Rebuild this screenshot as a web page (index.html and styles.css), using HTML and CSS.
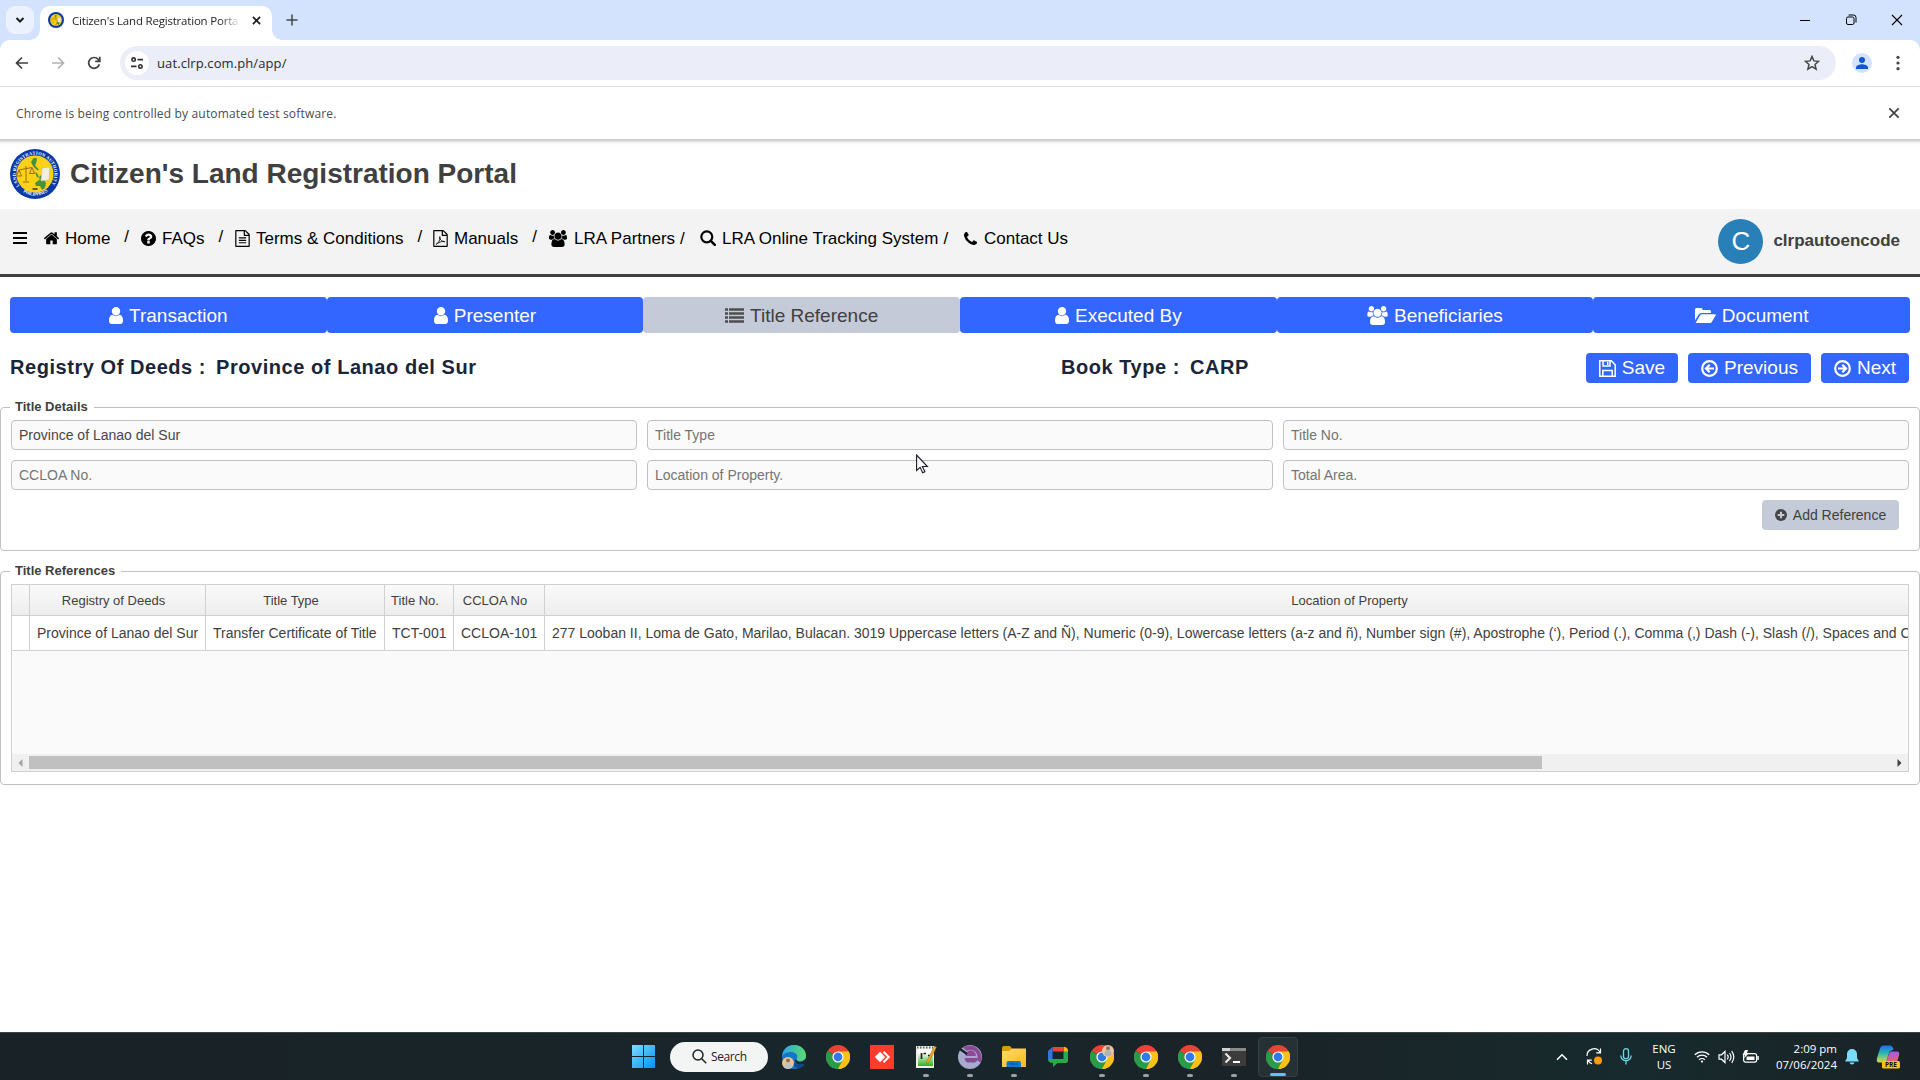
FILE: index.html
```html
<!DOCTYPE html>
<html lang="en">
<head>
<meta charset="utf-8">
<title>Citizen's Land Registration Portal</title>
<link rel="stylesheet" href="styles.css">
</head>
<body>
<svg class="defs" aria-hidden="true">
  <defs>
    <path id="arc-top" d="M9.6 36.8A19.4 19.4 0 1 1 40.4 36.8"/>
    <path id="arc-bottom" d="M10 40.5A21.6 21.6 0 0 0 40 40.5"/>
    <linearGradient id="win" x1="0" y1="0" x2="1" y2="1"><stop offset="0" stop-color="#7fdcff"/><stop offset="1" stop-color="#0091f5"/></linearGradient>
    <linearGradient id="edge" x1="0" y1="0" x2="1" y2="0"><stop offset="0" stop-color="#2aa5e8"/><stop offset="1" stop-color="#5ddb6a"/></linearGradient>
    <linearGradient id="npp" x1="0" y1="0" x2="0" y2="1"><stop offset="0.2" stop-color="#fff"/><stop offset="1" stop-color="#2fb31d"/></linearGradient>
    <linearGradient id="folder" x1="0" y1="0" x2="1" y2="1"><stop offset="0" stop-color="#ffdc6b"/><stop offset="1" stop-color="#fbb91d"/></linearGradient>
    <linearGradient id="cop1" x1="0" y1="0" x2="0" y2="1"><stop offset="0" stop-color="#1b6ff0"/><stop offset="0.45" stop-color="#2bb8b0"/><stop offset="1" stop-color="#d6dd3c"/></linearGradient>
    <linearGradient id="cop2" x1="0" y1="0" x2="0" y2="1"><stop offset="0" stop-color="#a05cf0"/><stop offset="1" stop-color="#f0605e"/></linearGradient>
  </defs>
  <symbol id="seal" viewBox="0 0 50 50">
    <circle cx="25" cy="25" r="25" fill="#0a3aa6"/>
    <circle cx="25" cy="25" r="18.6" fill="#fdd116"/>
    <path d="M23.5 9l3.500.3-.6 4-1.200 2.700 1.500 2.600 2.300 2-1.400.8-3.400-3-1.800-2.400-1.400-3z" fill="#4a8f3c"/>
    <path d="M25 23l2 1 2 4-2 .5zM30 26l2 2-1 3-2-1zM25 34l4-3 5 0 2 3-1 5-3 2-2-4-4 0z" fill="#4a8f3c"/>
    <path d="M32 19l8-1-1 13-8 1z" fill="#f4efdd" stroke="#b9b7a8" stroke-width=".6"/>
    <path d="M16 17v15M9 21l13-2.500M9 21l-2.500 6h5zM22 18.500l-2.500 6h5zM13 33h6" fill="none" stroke="#9a6a1c" stroke-width="1"/>
    <path d="M22.500 40h5" stroke="#333" stroke-width="1.500"/>
  </symbol>
  <symbol id="user" viewBox="256 128 1280 1536"><path d="M1536 1399q0 109-62.5 187t-150.5 78h-854q-88 0-150.5-78t-62.5-187q0-85 8.5-160.5t31.5-152 58.5-131 94-89 134.5-34.5q131 128 313 128t313-128q76 0 134.5 34.5t94 89 58.5 131 31.5 152 8.500 160.500zm-256-887q0 159-112.500 271.500t-271.500 112.500-271.500-112.500-112.500-271.500 112.500-271.500 271.500-112.500 271.500 112.500 112.500 271.500z"/></symbol>
  <symbol id="users" viewBox="0 0 1920 1792"><path d="M593 896q-162 5-265 128h-134q-82 0-138-40.5t-56-118.5q0-353 124-353 6 0 43.5 21t97.5 42.5 119 21.5q67 0 133-23-5 37-5 66 0 139 81 256zm1071 637q0 120-73 189.5t-194 69.5h-874q-121 0-194-69.5t-73-189.5q0-53 3.5-103.5t14-109 26.5-108.5 43-97.5 62-81 85.5-53.5 111.5-20q10 0 43 21.5t73 48 107 48 135 21.5 135-21.5 107-48 73-48 43-21.5q61 0 111.5 20t85.5 53.5 62 81 43 97.5 26.5 108.5 14 109 3.5 103.5zm-1024-1277q0 106-75 181t-181 75-181-75-75-181 75-181 181-75 181 75 75 181zm704 384q0 159-112.5 271.5t-271.5 112.5-271.5-112.5-112.5-271.5 112.5-271.5 271.5-112.5 271.5 112.5 112.5 271.5zm576 225q0 78-56 118.5t-138 40.5h-134q-103-123-265-128 81-117 81-256 0-29-5-66 66 23 133 23 59 0 119-21.5t97.5-42.5 43.5-21q124 0 124 353zm-128-609q0 106-75 181t-181 75-181-75-75-181 75-181 181-75 181 75 75 181z"/></symbol>
  <symbol id="chrome" viewBox="0 0 24 24">
    <path d="M12 12L1.600 6A12 12 0 0 1 22.400 6z" fill="#ea4335"/>
    <path d="M12 12l10.400-6A12 12 0 0 1 12 24z" fill="#fbc116"/>
    <path d="M12 12v12A12 12 0 0 1 1.600 6z" fill="#2a9b47"/>
    <path d="M12 6.500h10.700A12 12 0 0 1 12 24l4.800-9.300z" fill="#fbc116"/>
    <path d="M12 24l4.800-9.300-9.600 0L1.600 6A12 12 0 0 0 12 24z" fill="#2a9b47"/>
    <circle cx="12" cy="12" r="5.600" fill="#fff"/><circle cx="12" cy="12" r="4.400" fill="#2f7be8"/>
  </symbol>
</svg>

<header class="browser">
  <div class="tabstrip">
    <div class="tab-search"><svg width="10" height="10" viewBox="0 0 10 10"><path d="M1.500 3l3.500 3.500L8.500 3" fill="none" stroke="#1f1f1f" stroke-width="2"/></svg></div>
    <div class="tab">
      <svg class="favicon" width="16" height="16"><use href="#seal"/></svg>
      <span class="tab-title">Citizen's Land Registration Porta</span>
      <svg class="tab-close" width="9" height="9" viewBox="0 0 10 10"><path d="M1 1l8 8M9 1L1 9" stroke="#1f1f1f" stroke-width="1.900"/></svg>
    </div>
    <svg class="new-tab" width="12" height="12" viewBox="0 0 12 12"><path d="M6 .5v11M.5 6h11" stroke="#444746" stroke-width="1.500"/></svg>
    <div class="window-controls">
      <svg width="12" height="12" viewBox="0 0 12 12"><path d="M1 6.500h10" stroke="#000"/></svg>
      <svg width="12" height="12" viewBox="0 0 12 12"><rect x="1.500" y="3" width="7.500" height="7.500" rx="1.500" fill="none" stroke="#000"/><path d="M3.500 1h5a2.500 2.500 0 0 1 2.500 2.500v5" fill="none" stroke="#000"/></svg>
      <svg width="12" height="12" viewBox="0 0 12 12"><path d="M1 1l10 10M11 1L1 11" stroke="#000" stroke-width="1.100"/></svg>
    </div>
  </div>
  <div class="toolbar">
    <svg width="14" height="14" viewBox="0 0 14 14"><path d="M13 7H2M7 1.500L1.500 7 7 12.500" fill="none" stroke="#3c4043" stroke-width="1.700"/></svg>
    <svg width="14" height="14" viewBox="0 0 14 14"><path d="M1 7h11M7 1.500L12.500 7 7 12.500" fill="none" stroke="#b0b3b6" stroke-width="1.700"/></svg>
    <svg width="14" height="14" viewBox="0 0 14 14"><path d="M12.300 8.200A5.400 5.400 0 1 1 11 3.200L12.600 5M12.800.7v4.600H8.200" fill="none" stroke="#3c4043" stroke-width="1.700"/></svg>
    <div class="omnibox">
      <span class="site-info"><svg width="14" height="14" viewBox="0 0 14 14" fill="none" stroke="#333" stroke-width="1.600"><circle cx="3.600" cy="3.600" r="1.700"/><path d="M7.500 3.600H13M1 10.400h5.500"/><circle cx="10.400" cy="10.400" r="1.700"/></svg></span>
      <span class="url">uat.clrp.com.ph/app/</span>
      <svg class="star" width="16" height="16" viewBox="0 0 16 16"><path d="M8 1.500l1.900 4.400 4.700.4-3.600 3.100 1.100 4.700L8 11.600l-4.100 2.500L5 9.400 1.400 6.300l4.700-.4z" fill="none" stroke="#444746" stroke-width="1.500"/></svg>
    </div>
    <span class="profile"><svg width="12" height="12" viewBox="0 0 12 12" fill="#0b57d0"><circle cx="6" cy="3" r="3"/><path d="M0 12v-1.500C0 8 4 7.200 6 7.200S12 8 12 10.500V12z"/></svg></span>
    <svg class="menu-dots" width="4" height="16" viewBox="0 0 4 16" fill="#444746"><circle cx="2" cy="2.300" r="1.600"/><circle cx="2" cy="8" r="1.600"/><circle cx="2" cy="13.700" r="1.600"/></svg>
  </div>
  <div class="infobar">
    <span>Chrome is being controlled by automated test software.</span>
    <svg width="12" height="12" viewBox="0 0 12 12"><path d="M1.300 1.300l9.400 9.400M10.700 1.300l-9.400 9.400" stroke="#3c4043" stroke-width="1.700"/></svg>
  </div>
</header>

<div class="masthead">
  <svg class="logo" width="50" height="50" viewBox="0 0 50 50">
    <use href="#seal"/>
    <text class="seal-text"><textPath href="#arc-top" textLength="84">LAND REGISTRATION AUTHORITY</textPath></text>
    <text class="seal-text"><textPath href="#arc-bottom" startOffset="4" textLength="26">PHILIPPINES</textPath></text>
  </svg>
  <h1>Citizen's Land Registration Portal</h1>
</div>

<nav class="nav">
  <svg class="burger" width="14" height="14" viewBox="0 0 14 14"><path d="M0 2h14M0 7h14M0 12h14" stroke="#000" stroke-width="2.200"/></svg>
  <div class="nav-item home"><svg width="15" height="14" viewBox="90 150 1612 1450"><path d="M1472 992v480q0 26-19 45t-45 19h-384v-384h-256v384h-384q-26 0-45-19t-19-45v-480q0-1 .5-3t.5-3l575-474 575 474q1 2 1 6zm223-69l-62 74q-8 9-21 11h-3q-13 0-21-7l-692-577-692 577q-12 8-24 7-13-2-21-11l-62-74q-8-10-7-23.5t11-21.5l719-599q32-26 76-26t76 26l244 204v-195q0-14 9-23t23-9h192q14 0 23 9t9 23v408l219 182q10 8 11 21.5t-7 23.5z"/></svg><span>Home</span><i>/</i></div>
  <div class="nav-item faqs"><svg width="15" height="15" viewBox="128 128 1536 1536"><path d="M1024 1376v-192q0-14-9-23t-23-9h-192q-14 0-23 9t-9 23v192q0 14 9 23t23 9h192q14 0 23-9t9-23zm256-672q0-88-55.5-163t-138.5-116-170-41q-243 0-371 213-15 24 8 42l132 100q7 6 19 6 16 0 25-12 53-68 86-92 34-24 86-24 48 0 85.5 26t37.5 59q0 38-20 61t-68 45q-63 28-115.5 86.5t-52.5 125.5v36q0 14 9 23t23 9h192q14 0 23-9t9-23q0-19 21.5-49.5t54.5-49.5q32-18 49-28.5t46-35 44.5-48 28-60.5 12.5-81zm384 192q0 209-103 385.5t-279.5 279.5-385.5 103-385.5-103-279.5-279.5-103-385.5 103-385.5 279.5-279.5 385.5-103 385.5 103 279.5 279.5 103 385.5z"/></svg><span>FAQs</span><i>/</i></div>
  <div class="nav-item terms"><svg width="15" height="17" viewBox="128 0 1536 1792"><path d="M1596 380q28 28 48 76t20 88v1152q0 40-28 68t-68 28h-1344q-40 0-68-28t-28-68v-1600q0-40 28-68t68-28h896q40 0 88 20t76 48zm-444-244v376h376q-10-29-22-41l-313-313q-12-12-41-22zm384 1528v-1024h-416q-40 0-68-28t-28-68v-416h-768v1536h1280zm-1024-864q0-14 9-23t23-9h704q14 0 23 9t9 23v64q0 14-9 23t-23 9h-704q-14 0-23-9t-9-23v-64zm736 224q14 0 23 9t9 23v64q0 14-9 23t-23 9h-704q-14 0-23-9t-9-23v-64q0-14 9-23t23-9h704zm0 256q14 0 23 9t9 23v64q0 14-9 23t-23 9h-704q-14 0-23-9t-9-23v-64q0-14 9-23t23-9h704z"/></svg><span>Terms &amp; Conditions</span><i>/</i></div>
  <div class="nav-item manuals"><svg width="15" height="17" viewBox="128 0 1536 1792"><path d="M1596 380q28 28 48 76t20 88v1152q0 40-28 68t-68 28h-1344q-40 0-68-28t-28-68v-1600q0-40 28-68t68-28h896q40 0 88 20t76 48zm-444-244v376h376q-10-29-22-41l-313-313q-12-12-41-22zm384 1528v-1024h-416q-40 0-68-28t-28-68v-416h-768v1536h1280z"/><path d="M440 1500c200-60 440-420 400-800-80-30-60 460 500 560 60-120-500-80-900 240z" fill="none" stroke="#000" stroke-width="90"/></svg><span>Manuals</span><i>/</i></div>
  <div class="nav-item partners"><svg width="18" height="17"><use href="#users"/></svg><span>LRA Partners</span><i>/</i></div>
  <div class="nav-item tracking"><svg width="16" height="16" viewBox="0 0 16 16"><circle cx="6.800" cy="6.800" r="5.500" fill="none" stroke="#000" stroke-width="2.200"/><path d="M10.800 10.800l4 4" stroke="#000" stroke-width="2.500" stroke-linecap="round"/></svg><span>LRA Online Tracking System</span><i>/</i></div>
  <div class="nav-item contact"><svg width="13" height="13" viewBox="192 128 1408 1408"><path d="M1600 1240q0 27-10 70.5t-21 68.5q-21 50-122 106-94 51-186 51-27 0-53-3.5t-57.5-12.5-47-14.5-55.5-20.5-49-18q-98-35-175-83-127-79-264-216t-216-264q-48-77-83-175-3-9-18-49t-20.5-55.5-14.5-47-12.5-57.5-3.5-53q0-92 51-186 56-101 106-122 25-11 68.5-21t70.5-10q14 0 21 3 18 6 53 76 11 19 30 54t35 63.5 31 53.5q3 4 17.5 25t21.5 35.5 7 28.5q0 20-28.5 50t-62 55-62 53-28.5 46q0 9 5 22.5t8.5 20.5 14 24 11.5 19q76 137 174 235t235 174q2 1 19 11.5t24 14 20.5 8.5 22.5 5q18 0 46-28.5t53-62 55-62 50-28.5q14 0 28.5 7t35.5 21.5 25 17.5q25 15 53.5 31t63.5 35 54 30q70 35 76 53 3 7 3 21z"/></svg><span>Contact Us</span></div>
  <div class="account"><span class="avatar">C</span><b>clrpautoencode</b></div>
</nav>

<main>
  <div class="steps">
    <div class="step"><svg width="14" height="17"><use href="#user"/></svg><span>Transaction</span></div>
    <div class="step"><svg width="14" height="17"><use href="#user"/></svg><span>Presenter</span></div>
    <div class="step current"><svg width="19" height="15" viewBox="0 0 19 15"><path d="M0 1.500h3M0 5.500h3M0 9.500h3M0 13.500h3M4 1.500h15M4 5.500h15M4 9.500h15M4 13.500h15" stroke="#4d4d4d" stroke-width="2.600"/></svg><span>Title Reference</span></div>
    <div class="step"><svg width="14" height="17"><use href="#user"/></svg><span>Executed By</span></div>
    <div class="step"><svg width="21" height="19"><use href="#users"/></svg><span>Beneficiaries</span></div>
    <div class="step"><svg width="21" height="15" viewBox="0 0 21 15"><path d="M0 12.500V1.500Q0 0 1.500 0H6q1.500 0 1.500 1.500V2h7q1.500 0 1.500 1.500V5H6.500Q4.800 5 3.600 6.500zM1 14.200l4-6.700Q5.600 6.300 7 6.300h13q1.300 0 .6 1.200l-3.500 6Q16.300 15 15 15H1.500q-1 0-.5-.8z"/></svg><span>Document</span></div>
  </div>

  <div class="summary">
    <h2>Registry Of Deeds :<span>Province of Lanao del Sur</span></h2>
    <h2 class="book">Book Type :<span>CARP</span></h2>
    <div class="actions">
      <button class="btn save"><svg width="17" height="17" viewBox="0 0 17 17" fill="none" stroke="#fff" stroke-width="1.500"><path d="M.8.800h11.500l3.900 3.900v11.500H.8zM4 1v5h7V1M8.700 2v3M3.800 16v-5.500h9.400V16"/></svg>Save</button>
      <button class="btn previous"><svg width="17" height="17" viewBox="0 0 17 17" fill="none" stroke="#fff" stroke-width="2.200"><circle cx="8.500" cy="8.500" r="7.300"/><path d="M13 8.500H5.500M8.700 4.800L5 8.500l3.700 3.700"/></svg>Previous</button>
      <button class="btn next"><svg width="17" height="17" viewBox="0 0 17 17" fill="none" stroke="#fff" stroke-width="2.200"><circle cx="8.500" cy="8.500" r="7.300"/><path d="M4 8.500h7.500M8.300 4.800L12 8.500l-3.700 3.700"/></svg>Next</button>
    </div>
  </div>

  <fieldset class="details">
    <legend>Title Details</legend>
    <div class="fields">
      <input value="Province of Lanao del Sur">
      <input placeholder="Title Type">
      <input placeholder="Title No.">
      <input placeholder="CCLOA No.">
      <input placeholder="Location of Property.">
      <input placeholder="Total Area.">
    </div>
    <button class="add"><svg width="12" height="12" viewBox="0 0 12 12"><circle cx="6" cy="6" r="6" fill="#464646"/><path d="M6 2.700v6.600M2.700 6h6.600" stroke="#c4cad8" stroke-width="2"/></svg>Add Reference</button>
  </fieldset>

  <fieldset class="references">
    <legend>Title References</legend>
    <div class="grid">
      <div class="row head"><div></div><div>Registry of Deeds</div><div>Title Type</div><div>Title No.</div><div>CCLOA No</div><div>Location of Property</div></div>
      <div class="row"><div></div><div>Province of Lanao del Sur</div><div>Transfer Certificate of Title</div><div>TCT-001</div><div>CCLOA-101</div><div>277 Looban II, Loma de Gato, Marilao, Bulacan. 3019 Uppercase letters (A-Z and Ñ), Numeric (0-9), Lowercase letters (a-z and ñ), Number sign (#), Apostrophe (‘), Period (.), Comma (,) Dash (-), Slash (/), Spaces and C</div></div>
      <div class="scrollbar">
        <svg width="5" height="8" viewBox="0 0 5 8"><path d="M4.500 0v8L.5 4z" fill="#a3a3a3"/></svg>
        <div class="thumb"></div>
        <svg class="right" width="5" height="8" viewBox="0 0 5 8"><path d="M.5 0v8l4-4z" fill="#404040"/></svg>
      </div>
    </div>
  </fieldset>
</main>

<svg class="cursor" width="13" height="20" viewBox="0 0 13 20"><path d="M.6 1v15.500l3.500-3.200 2.600 5.500 2.200-1-2.500-5.300h5z" fill="#fff" stroke="#1a1a2a" stroke-width="1.100"/></svg>

<footer class="taskbar">
  <svg class="start" width="23" height="23" viewBox="0 0 23 23"><path d="M0 0h11v11H0zM12 0h11v11H12zM0 12h11v11H0zM12 12h11v11H12z" fill="url(#win)"/></svg>
  <div class="search"><svg width="15" height="15" viewBox="0 0 15 15" fill="none" stroke="#222" stroke-width="1.500"><circle cx="6" cy="6" r="5"/><path d="M9.700 9.700l4.500 4.500"/></svg>Search</div>
  <div class="apps">
    <div class="app"><svg width="24" height="24" viewBox="0 0 24 24"><circle cx="12" cy="12" r="12" fill="#1377c9"/><path d="M0 11C1 3 7 0 12 0c7 0 12 5 12 10.500 0 4-3 6-6.500 6-3 0-4-1.200-3.200-2.200 2.700-3.300-.3-7.300-4.800-7.300C5 7 1 9 0 11z" fill="url(#edge)"/><path d="M11 13c0 5 4 8 10.500 5.800C23 18 22 21 18 23c-5 1-9-4-7-10z" fill="#0c4b94"/><path d="M14 14c2 4 6 3.500 10-.5V19h-3c-4 1.500-8 0-8-4z" fill="#1b2831"/><circle cx="6" cy="18" r="6" fill="#edc58c"/><circle cx="6" cy="15.500" r="2" fill="#8b6d58"/><path d="M2.500 22.500q0-5 3.500-5t3.500 5q-3.500 3-7 0z" fill="#b9c3cd"/></svg></div>
    <div class="app"><svg width="24" height="24"><use href="#chrome"/></svg></div>
    <div class="app"><svg width="24" height="24" viewBox="0 0 24 24"><path d="M0 0h24v24H0z" fill="#ff3b30"/><path d="M10 6.800l5.200 5.200-5.200 5.200L4.800 12z" fill="#fff"/><path d="M13.500 6.800l5.200 5.200-5.200 5.200" fill="none" stroke="#fff" stroke-width="2"/></svg></div>
    <div class="app open"><svg width="24" height="24" viewBox="0 0 24 24"><path d="M2 1h18v22H2z" fill="#f0f0e8"/><path d="M4 4h15v17H4z" fill="url(#npp)"/><path d="M3 2.500h16" stroke="#5b6a55" stroke-width="2" stroke-dasharray="1.500 1.500"/><path d="M7.500 8v6M9.500 8.500h2.500M14 10.500h2" stroke="#222" stroke-width="1.700"/><path d="M20.500 1l2 1.200-7.500 15-2.500 2 .5-3.200z" fill="#f6ac23" stroke="#8b5a14" stroke-width=".5"/></svg></div>
    <div class="app open"><svg width="24" height="24" viewBox="0 0 24 24"><circle cx="12" cy="12" r="12" fill="#a7a9cf"/><path d="M5 2.500A12 12 0 0 1 22.500 17.500L17 14z" fill="#8c4a96"/><circle cx="12.500" cy="12" r="7.200" fill="#a7a9cf"/><path d="M8 10.500a4.700 4.700 0 0 1 9.400 0zM7 13.500h12.500q-1 3-2.500 3.500H9q-1.500-1-2-3.500z" fill="#8c4a96" stroke="#8c4a96"/><path d="M2 4l7 5" stroke="#1b2529" stroke-width="2.500"/></svg></div>
    <div class="app open"><svg width="24" height="24" viewBox="0 0 24 24"><path d="M0 3q0-2 2-2h6l2 2.500V8H0z" fill="#d99a0b"/><path d="M0 6h7l3-2.500h14V22H0z" fill="url(#folder)"/><path d="M4.500 22v-4q0-2 2-2h10.500q2 0 2 2v4z" fill="#1678c8"/><path d="M7 19h9" stroke="#0c5ba0" stroke-width="1.500"/></svg></div>
    <div class="app"><svg width="20" height="20" viewBox="0 0 20 20"><path d="M4.500 0h11.500v4.500H4.500z" fill="#e94335"/><path d="M16 0q4 0 4 4v2h-4z" fill="#fbbc04"/><path d="M15.500 4.500H20V14q0 2-2 2H9.500L5 20v-4q-5 0-5-4h15.500z" fill="#28a94f"/><path d="M0 4l4.500-4v12H0z" fill="#2f75e8"/></svg></div>
    <div class="app open"><svg width="24" height="24" viewBox="0 0 24 24"><use href="#chrome" width="24" height="24"/><circle cx="18" cy="6" r="6" fill="#e8c79c"/><circle cx="18" cy="3.300" r="2" fill="#8b7769"/><path d="M14.500 10q0-5 3.500-5t3.500 5q-3.500 2.500-7 0z" fill="#aeb4bb"/></svg></div>
    <div class="app open"><svg width="24" height="24"><use href="#chrome"/></svg></div>
    <div class="app open"><svg width="24" height="24"><use href="#chrome"/></svg></div>
    <div class="app open"><svg width="24" height="18" viewBox="0 0 24 18"><path d="M0 1q0-1 1-1h22q1 0 1 1v16q0 1-1 1H1q-1 0-1-1z" fill="#3c3c3c"/><path d="M0 0h24v3H0z" fill="#8a8a8a"/><path d="M0 0h8v3H0z" fill="#d0d0d0"/><path d="M3.500 5.500L8 10l-4.500 4.500" fill="none" stroke="#e6e6e6" stroke-width="2.200"/><path d="M11 14h7" stroke="#fff" stroke-width="2"/></svg></div>
    <div class="app open active"><svg width="24" height="24"><use href="#chrome"/></svg></div>
  </div>
  <div class="tray">
    <svg width="12" height="8" viewBox="0 0 12 8"><path d="M1 6.800l5-5 5 5" fill="none" stroke="#fff" stroke-width="1.600"/></svg>
    <svg class="sync" width="17" height="17" viewBox="0 0 17 17" fill="none" stroke="#fff" stroke-width="1.200"><path d="M1 8a7 7 0 0 1 13-3.800M14.500.500v4.300h-4.300M6 15.800A7 7 0 0 1 2 12M1.500 16.500v-4.300h4.300"/><circle cx="12" cy="12.500" r="4" fill="#ff9a0d" stroke="none"/></svg>
    <svg class="mic" width="12" height="17" viewBox="0 0 12 17" fill="none" stroke="#7fd0e8" stroke-width="1.300"><rect x="3.500" y=".7" width="5" height="10" rx="2.500"/><path d="M.8 7.500a5.200 5.200 0 0 0 10.400 0M6 12.800V16.500"/></svg>
    <div class="lang">ENG<br>US</div>
    <svg class="wifi" width="16" height="13" viewBox="0 0 16 13" fill="none" stroke="#fff" stroke-width="1.300"><path d="M.8 4.800a10.200 10.200 0 0 1 14.400 0M3 7.300a7 7 0 0 1 10 0M5.200 9.700a4 4 0 0 1 5.600 0"/><circle cx="8" cy="11.600" r="1.100" fill="#fff" stroke="none"/></svg>
    <svg class="volume" width="17" height="14" viewBox="0 0 17 14" fill="none" stroke="#fff" stroke-width="1.200"><path d="M1 4.800h2.500L7 1.500v11L3.500 9.200H1zM9.300 4.700q1.700 2.300 0 4.600M11.500 3q3 4 0 8M13.700 1.200q4.200 5.800 0 11.600"/></svg>
    <svg class="battery" width="17" height="13" viewBox="0 0 17 13"><rect x="1.600" y="3.600" width="13" height="8.500" rx="2" fill="none" stroke="#fff" stroke-width="1.200"/><path d="M4.500 6.500h8v3.500h-8zM15.300 6h1.500v4h-1.500zM3 0h3L5 3h2L2 8.500 3 5H.5z" fill="#fff"/></svg>
    <div class="clock">2:09 pm<br>07/06/2024</div>
    <svg class="bell" width="14" height="16" viewBox="0 0 14 16" fill="#79dcfb"><path d="M7 0a5 5 0 0 1 5 5v4l2 3.500H0L2 9V5a5 5 0 0 1 5-5zM4.500 13.500h5Q9 15.500 7 15.500t-2.500-2z"/></svg>
    <svg class="copilot" width="24" height="24" viewBox="0 0 24 24"><path d="M7 .5h7q2.500 0 3.500 4l-4 2-2.500 8q-1 3-4 3H2.500Q0 17 1 13L4 3.500Q5 .5 7 .5z" fill="url(#cop1)"/><path d="M14.500 6.500H21q3 0 2 4l-2 6.500H10l3-8q.500-2.500 1.500-2.500z" fill="url(#cop2)"/><rect x="6" y="16" width="18" height="7.500" rx="1.500" fill="#fcc60a"/><text x="15" y="22" class="pre">PRE</text></svg>
  </div>
</footer>
</body>
</html>
```
FILE: styles.css
```css
* { box-sizing: border-box; }
body {
  margin: 0;
  width: 1920px;
  height: 1080px;
  overflow: hidden;
  background: #fff;
  color: #404040;
  font-family: "Liberation Sans", Arial, sans-serif;
  font-size: 14px;
  display: flex;
  flex-direction: column;
}
svg { display: block; flex: none; }
.defs { position: absolute; width: 0; height: 0; }

/* Browser window */
.browser { flex: none; font-family: "Open Sans", "Noto Sans", sans-serif; background: #d3e3fd; }
.tabstrip { height: 40px; display: flex; align-items: flex-end; padding-left: 6px; }
.tab-search {
  width: 28px; height: 28px; margin-bottom: 6px; border-radius: 9px;
  background: #ebf2fe; display: grid; place-items: center;
}
.tab {
  position: relative; width: 232px; height: 34px; margin-left: 6px; padding: 0 11px 6px 8px;
  background: #fff; border-radius: 10px 10px 0 0; display: flex; align-items: center;
}
.tab::before, .tab::after {
  content: ""; position: absolute; bottom: 0; width: 10px; height: 10px;
}
.tab::before { left: -10px; background: radial-gradient(circle at 0 0, transparent 9.5px, #fff 10px); }
.tab::after { right: -10px; background: radial-gradient(circle at 100% 0, transparent 9.5px, #fff 10px); }
.tab-title {
  width: 172px; margin-left: 8px; overflow: hidden; white-space: nowrap; font-size: 11.5px; letter-spacing: -0.2px; color: #1f1f1f;
  mask-image: linear-gradient(90deg, #000 148px, transparent 169px);
}
.tab-close { margin-left: auto; }
.new-tab { margin: 0 0 14px 14px; }
.window-controls { margin: 0 17px 14px auto; display: flex; gap: 34px; }
.toolbar {
  height: 46px; background: #fff; border-radius: 10px 10px 0 0;
  display: flex; align-items: center; padding: 0 20px 0 15px; gap: 22px;
}
.omnibox {
  width: 1716px; height: 34px; margin-left: -3px; border-radius: 17px; background: #ebeef8;
  display: flex; align-items: center; padding: 0 16px 0 5px;
}
.site-info { width: 24px; height: 24px; border-radius: 50%; background: #fff; display: grid; place-items: center; }
.url { margin-left: 8px; font-size: 13px; letter-spacing: 0.1px; color: #28292c; }
.star { margin-left: auto; }
.profile {
  width: 20px; height: 20px; margin-left: -6px; border-radius: 50%; background: #d3e3fd;
  display: grid; place-items: center;
}
.menu-dots { margin-left: 2px; }
.infobar {
  height: 53px; background: #fff; border-top: 1px solid #dcdfe0;
  display: flex; align-items: center; justify-content: space-between; padding: 0 20px 0 16px;
  font-size: 12px; letter-spacing: 0.17px; color: #4a4d51;
}

/* Portal header */
.masthead {
  flex: none; height: 70px; padding: 2px 0 0 10px; display: flex; align-items: center; gap: 10px;
  background: linear-gradient(#cdd0d0 0, #d3d5d5 2px, #f0f0f0 3px, #fff 6px);
}
.logo { margin-top: -2px; overflow: visible; }
.seal-text { font: bold 4.5px "Liberation Serif", serif; fill: #fff; }
h1 { margin: 0 0 2px; font-size: 28px; line-height: 32px; }
.nav {
  flex: none; height: 68px; padding: 0 20px 0 13px; background: #f3f3f3; border-bottom: 3px solid #404040;
  display: flex; align-items: flex-start; color: #000; font-size: 17px;
}
.burger { margin: 22px 17px 0 0; }
.nav-item { height: 24px; margin-top: 17px; display: flex; align-items: center; white-space: nowrap; }
.nav-item span { margin-left: 6px; position: relative; top: 1px; }
.nav-item i { font-style: normal; margin-left: 14px; position: relative; top: -1px; }
.home { width: 97px; }
.faqs { width: 94px; }
.terms { width: 198px; }
.manuals { width: 116px; }
.partners { width: 151px; }
.partners span { margin-left: 7px; }
.tracking { width: 264px; }
.contact span { margin-left: 7px; }
.partners i, .tracking i { margin-left: 5px; top: 1px; }
.account { margin-left: auto; height: 64px; display: flex; align-items: center; gap: 10px; color: #404040; font-size: 17px; }
.avatar {
  width: 45px; height: 45px; border-radius: 50%; background: #2980b9; color: #fff;
  font-size: 26px; display: grid; place-items: center;
}

/* Wizard steps */
.steps { margin: 20px 10px 0; display: grid; grid-template-columns: repeat(6, 1fr); }
.step {
  height: 36px; border-radius: 4px; background: #36f; color: #fff; fill: #fff; font-size: 19px;
  display: flex; align-items: center; justify-content: center; gap: 6px;
}
.step span { padding-top: 1px; }
.current { background: #c4cad8; color: #404040; }
.summary { height: 30px; margin: 20px 11px 0 10px; display: flex; align-items: center; }
h2 { margin: 0 0 1px; font-size: 20px; letter-spacing: 0.55px; color: #1b2539; width: 1051px; white-space: nowrap; }
h2 span { margin-left: 10px; }
.book { width: auto; }
.actions { margin-left: auto; display: flex; gap: 10px; }
button { border: 0; border-radius: 4px; font-family: inherit; padding: 0; height: 30px; display: flex; align-items: center; justify-content: center; }
.btn { background: #36f; color: #fff; font-size: 19px; gap: 6px; }
.save { width: 92px; }
.previous { width: 123px; }
.next { width: 88px; }

/* Field sets */
fieldset { margin: 0; padding: 0 10px; border: 1px solid #c0c0c0; border-radius: 4px; min-width: 0; }
legend { margin-left: -1px; padding: 0 6px 0 5px; font-size: 13px; font-weight: bold; line-height: 16px; }
.details { height: 152px; margin-top: 16px; }
.fields { margin-top: 5px; display: grid; grid-template-columns: repeat(3, 1fr); gap: 10px; }
input {
  height: 30px; min-width: 0; border: 1px solid #c0c0c0; border-radius: 4px; background: #fafafa; padding: 0 7px 1px;
  font: 14px "Liberation Sans", Arial, sans-serif; color: #474747;
}
input::placeholder { color: #757575; opacity: 1; }
.add { width: 137px; margin: 10px 10px 0 auto; background: #c4cad8; color: #404040; font-size: 14px; gap: 6px; }
.references { height: 222px; margin-top: 12px; }
.grid { height: 188px; margin-top: 5px; border: 1px solid #d0d0d0; background: #fafafa; overflow: hidden; display: flex; flex-direction: column; }
.row { display: grid; grid-template-columns: 18px 176px 179px 69px 91px 1618px; height: 35px; background: #fff; border-bottom: 1px solid #d0d0d0; flex: none; }
.row > div { border-right: 1px solid #d0d0d0; padding: 0 7px 0 7px; display: flex; align-items: center; white-space: nowrap; min-width: 0; }
.head { height: 31px; background: linear-gradient(#fafafa, #ededed); font-size: 13px; }
.head > div { justify-content: center; padding: 0 8px 0 0; }
.scrollbar { margin-top: auto; height: 17px; background: #f0f0f0; display: flex; align-items: center; padding: 0 6px; }
.thumb { width: 1513px; height: 13px; margin: 0 0 0 6px; background: #c0c0c0; }
.right { margin-left: auto; }

.cursor { position: absolute; left: 916px; top: 454px; }

/* Taskbar */
.taskbar {
  flex: none; height: 48px; margin-top: auto; background: linear-gradient(90deg, #192226, #18262b 50%, #1a2327 65%, #172a2d 85%, #192327);
  border-top: 1px solid #3b4347; display: flex; align-items: center; padding-left: 632px; color: #fff;
  font-family: "Open Sans", "Noto Sans", sans-serif;
}
.search {
  width: 98px; height: 30px; margin-left: 15px; padding: 0 0 1px 22px; border-radius: 15px; background: #f3f5f4; color: #222;
  display: flex; align-items: center; gap: 4px; font-size: 12px; letter-spacing: -0.4px;
}
.apps { display: flex; margin-left: 4px; }
.app { position: relative; width: 44px; height: 40px; display: grid; place-items: center; }
.open::after {
  content: ""; position: absolute; left: 19px; bottom: 0; width: 6px; height: 3px; border-radius: 2px; background: #9aa0a3;
}
.active { width: 40px; margin-left: 2px; background: #263136; border: 1px solid #344045; border-radius: 4px; }
.active::after { left: 11px; width: 16px; background: #5fc3f7; }
.tray { margin-left: 258px; display: flex; align-items: center; font-size: 11.500px; line-height: 16px; }
.sync { margin-left: 18px; }
.mic { margin-left: 17px; }
.lang { width: 36px; margin-left: 14px; text-align: center; }
.wifi { margin-left: 12px; }
.volume { margin-left: 8px; }
.battery { margin-left: 7px; }
.clock { width: 78px; text-align: right; }
.bell { margin-left: 8px; }
.copilot { margin-left: 17px; }
.pre { font: bold 6.500px "Open Sans", sans-serif; fill: #111; text-anchor: middle; }
```
